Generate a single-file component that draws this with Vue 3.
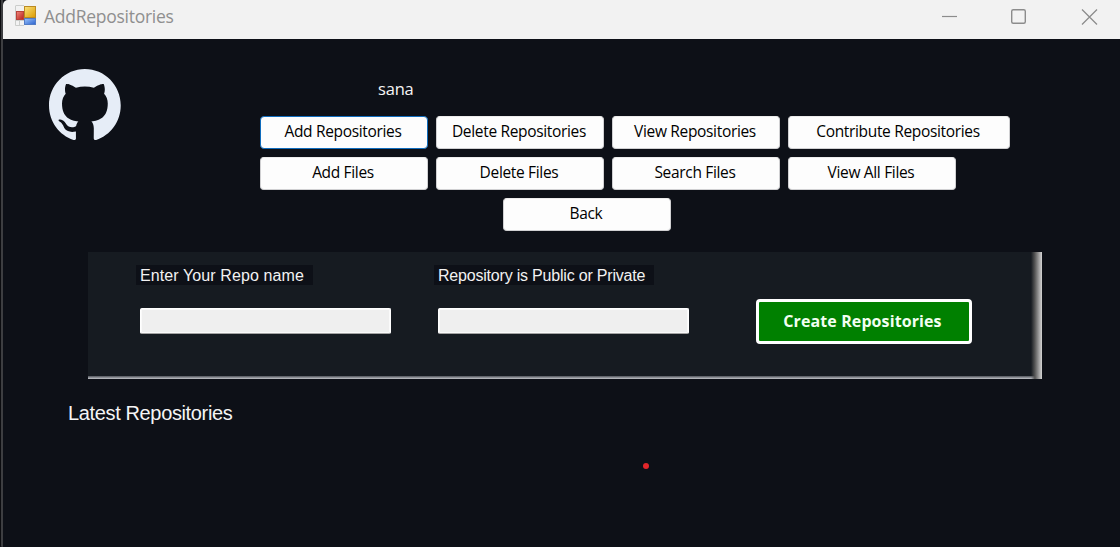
<script setup>
const rows = [
  [
    { label: 'Add Repositories', active: true },
    { label: 'Delete Repositories' },
    { label: 'View Repositories' },
    { label: 'Contribute Repositories', wide: true },
  ],
  [
    { label: 'Add Files' },
    { label: 'Delete Files' },
    { label: 'Search Files' },
    { label: 'View All Files' },
  ],
]
</script>

<template>
  <div class="frame">
    <div class="edge"></div>
    <div class="window">
      <header class="titlebar">
        <svg class="app-icon" width="22" height="22" viewBox="0 0 22 22">
          <defs>
            <linearGradient id="gold" x1="0" y1="0" x2="1" y2="1">
              <stop offset="0" stop-color="#fbe37c" /><stop offset="1" stop-color="#dc9a00" />
            </linearGradient>
            <linearGradient id="red" x1="0" y1="0" x2="1" y2="1">
              <stop offset="0" stop-color="#f08a80" /><stop offset="1" stop-color="#b81f18" />
            </linearGradient>
            <linearGradient id="blue" x1="0" y1="0" x2="1" y2="1">
              <stop offset="0" stop-color="#9cc5fa" /><stop offset="1" stop-color="#2b62cf" />
            </linearGradient>
          </defs>
          <path d="M.5 1v19.500H9M.5 .5H9M.5 15.500H9M4.500 15v5" fill="none" stroke="#cbcdcb" />
          <rect x="9.500" y="1.500" width="11" height="11" fill="url(#gold)" stroke="#bb8a22" />
          <rect x="1.500" y="6.500" width="7" height="8" fill="url(#red)" stroke="#b8433c" />
          <rect x="9.500" y="13.500" width="11" height="6" fill="url(#blue)" stroke="#537dc6" />
        </svg>
        <span class="title">AddRepositories</span>
        <svg class="controls" width="160" height="20" viewBox="0 0 160 20" fill="none" stroke="#8c8c8c">
          <path d="M2 9.500h15" stroke-width="1.200" />
          <rect x="71.700" y="2.700" width="13.600" height="13.600" rx="1.500" stroke-width="1.400" />
          <path d="M142 2.500l15 15M157 2.500l-15 15" stroke-width="1.300" />
        </svg>
      </header>

      <main class="content">
        <section class="top">
          <svg class="logo" viewBox="0 0 98 96" preserveAspectRatio="none">
            <path fill="#e6edf7" d="M48.854 0C21.839 0 0 22 0 49.217c0 21.756 13.993 40.172 33.405 46.69 2.427.49 3.316-1.059 3.316-2.362 0-1.141-.08-5.052-.08-9.127-13.59 2.934-16.42-5.867-16.42-5.867-2.184-5.704-5.42-7.17-5.42-7.17-4.448-3.015.324-3.015.324-3.015 4.934.326 7.523 5.052 7.523 5.052 4.367 7.496 11.404 5.378 14.235 4.074.404-3.178 1.699-5.378 3.074-6.6-10.839-1.141-22.243-5.378-22.243-24.283 0-5.378 1.94-9.778 5.014-13.2-.485-1.222-2.184-6.275.486-13.038 0 0 4.125-1.304 13.426 5.052a46.97 46.97 0 0 1 12.214-1.63c4.125 0 8.33.571 12.213 1.63 9.302-6.356 13.427-5.052 13.427-5.052 2.67 6.763.97 11.816.485 13.038 3.155 3.422 5.015 7.822 5.015 13.2 0 18.905-11.404 23.06-22.324 24.283 1.78 1.548 3.316 4.481 3.316 9.126 0 6.6-.08 11.897-.08 13.526 0 1.304.89 2.853 3.316 2.364 19.412-6.52 33.405-24.935 33.405-46.691C97.707 22 75.788 0 48.854 0z" />
          </svg>
          <div class="menu">
            <div class="user">sana</div>
            <div v-for="(row, i) in rows" :key="i" class="row">
              <button v-for="b in row" :key="b.label" class="btn" :class="{ active: b.active, wide: b.wide }">{{ b.label }}</button>
            </div>
            <div class="row back"><button class="btn">Back</button></div>
          </div>
        </section>

        <section class="panel">
          <div class="field">
            <label class="l1">Enter Your Repo name</label>
            <input type="text" />
          </div>
          <div class="field">
            <label class="l2">Repository is Public or Private</label>
            <input type="text" />
          </div>
          <button class="create">Create Repositories</button>
        </section>

        <div class="latest-row">
          <h2>Latest Repositories</h2>
        </div>
        <i class="dot"></i>
      </main>
    </div>
  </div>
</template>

<style>
html, body { background: #0d1017; overflow: hidden; }
</style>

<style scoped>
* { box-sizing: border-box; }
.frame {
  width: 1120px; height: 547px; overflow: hidden; display: flex;
  background: #0d1017;
  font-family: "Open Sans", "Noto Sans", sans-serif;
}
.edge { width: 3px; flex: none; background: linear-gradient(to right, #0b0c0f 1px, #3d3e41 1px); border-bottom-left-radius: 4px; }
.window { flex: 1; display: flex; flex-direction: column; }
.titlebar {
  height: 39px; flex: none; display: flex; align-items: flex-start;
  background: #f2f2f2; border-top-left-radius: 5px;
}
.app-icon { margin: 5px 0 0 12px; }
.title { margin: 4px 0 0 7px; font-size: 17.5px; letter-spacing: -0.27px; line-height: 24px; color: #8f8f8f; white-space: nowrap; }
.controls { margin: 7px 20px 0 auto; }
.content { flex: 1; display: flex; flex-direction: column; }
.top { display: flex; height: 213px; padding-left: 46px; }
.logo { width: 72px; height: 71px; margin-top: 30px; }
.menu { margin: 38px 0 0 139px; display: flex; flex-direction: column; gap: 8px; width: 750px; }
.user { height: 31px; line-height: 23px; padding-left: 118px; font-size: 16.5px; letter-spacing: -0.2px; color: #f5f5f5; }
.row { display: flex; gap: 8px; }
.back { padding-left: 243px; }
.btn {
  width: 168px; height: 33px; padding: 0 2px 3px 0; white-space: nowrap;
  border: 1px solid #d0d0d2; border-top-color: #ececec; border-radius: 4px; background: #fdfdfd; color: #000;
  font: 15.5px/27px "Open Sans", "Noto Sans", sans-serif; letter-spacing: -0.33px;
}
.btn.wide { width: 222px; }
.btn.active { border-color: #0f6cbd; }
.panel {
  width: 954px; height: 127px; margin-left: 85px; padding-left: 48px; flex: none;
  display: flex; align-items: flex-start;
  background:
    linear-gradient(to right, rgba(205,205,205,0), #555 35%, #d4d4d4) right top / 11px 100% no-repeat,
    linear-gradient(#50545b, #c3c5ca) left bottom / 100% 3px no-repeat,
    #161b21;
}
.field { width: 298px; padding-top: 13px; }
.field label {
  display: block; height: 20px; line-height: 21px; padding-left: 4px;
  background: #0d1017; color: #f2f2f2; white-space: nowrap;
  font-family: "Liberation Sans", Arial, sans-serif; font-size: 16px;
}
.field .l1 { width: 177px; letter-spacing: 0.1px; }
.field .l2 { width: 220px; letter-spacing: -0.2px; }
.field input {
  display: block; width: 251px; height: 26px; margin: 23px 0 0 4px;
  border: 1px solid #fff; border-bottom-color: #a3a3a3; border-radius: 2px; background: #efefef; outline: 0;
  box-shadow: inset 0 0 0 1px #fafafa;
}
.create {
  width: 216px; height: 45px; margin: 47px 0 0 24px; padding: 0 3px 2px 0;
  border: 3px solid #fff; border-radius: 4px; background: #008000; color: #f2fff2;
  font: 700 16px/24px "Open Sans", "Noto Sans", sans-serif; letter-spacing: 0.1px; white-space: nowrap;
}
.latest-row { padding: 22px 0 0 65px; }
h2 { margin: 0; font: 400 20px/24px "Liberation Sans", Arial, sans-serif; letter-spacing: -0.36px; color: #f5f5f5; white-space: nowrap; }
.dot { width: 6px; height: 6px; border-radius: 50%; background: #e2262a; margin: 38px 0 0 640px; }
</style>
